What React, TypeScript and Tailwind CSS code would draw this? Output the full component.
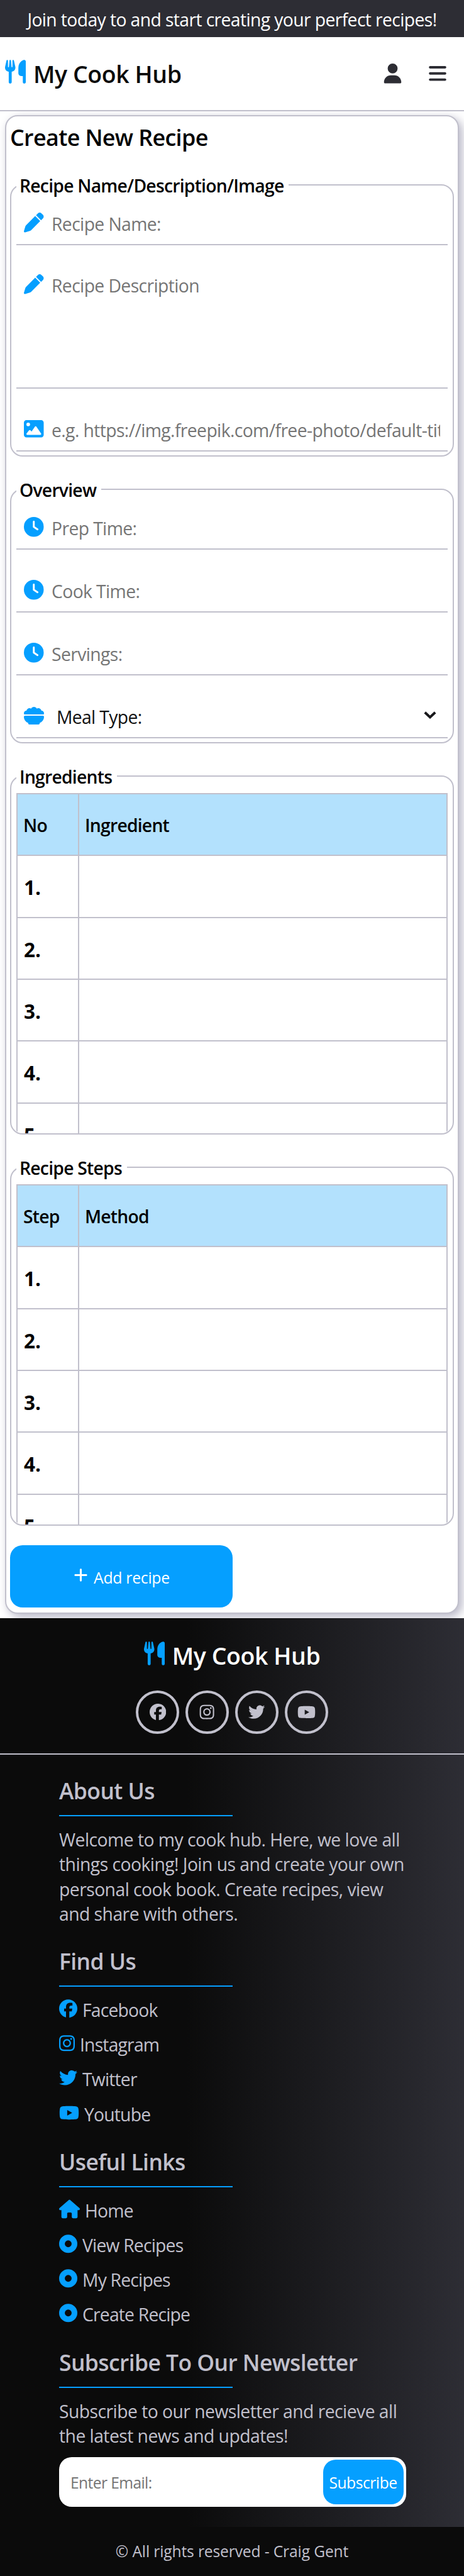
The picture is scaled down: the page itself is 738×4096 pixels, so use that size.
import type { ReactNode } from "react";
import {
  FaBars,
  FaBowlFood,
  FaCircleDot,
  FaClock,
  FaFacebook,
  FaHouse,
  FaImage,
  FaInstagram,
  FaPen,
  FaPlus,
  FaTwitter,
  FaUser,
  FaUtensils,
  FaYoutube,
} from "react-icons/fa6";

function Brand() {
  return (
    <div className="flex items-center">
      <FaUtensils className="-mt-[6px] h-[38px] w-[33px] text-[#059fff]" />
      <span className="ml-[12px] pt-[2px] text-[37.4px] leading-[50px] font-semibold tracking-[-0.38px]">My Cook Hub</span>
    </div>
  );
}

function Panel({ title, className = "", children }: { title: string; className?: string; children: ReactNode }) {
  return (
    <fieldset className={`min-w-0 rounded-[20px] border-2 border-[#c1c0cc] px-2 ${className}`}>
      <legend className="h-[40px] pt-px pr-[8px] pl-[5px] text-[28.3px] leading-[40px] font-semibold tracking-[-0.76px]">{title}</legend>
      {children}
    </fieldset>
  );
}

function Field({ icon, label, className = "h-[100px] items-end" }: { icon: ReactNode; label: string; className?: string }) {
  return (
    <div className={`flex border-b-2 border-[#c1c0cc] px-3 ${className}`}>
      <div className="flex h-[68px] min-w-0 flex-1 items-center">
        <span className="flex w-[32px] shrink-0 justify-center text-[31.5px] text-[#059fff]">{icon}</span>
        <span className="ml-[12px] min-w-0 flex-1 overflow-hidden pt-[3px] text-[28.3px] leading-[40px] tracking-[-0.6px] whitespace-nowrap text-[#757575]">
          {label}
        </span>
      </div>
    </div>
  );
}

function Sheet({ first, second }: { first: string; second: string }) {
  return (
    <div className="mt-[7px] border-x-2 border-t-2 border-[#c1c0cc] font-semibold">
      <div className="flex h-[98.37px] border-b-2 border-[#c1c0cc] bg-[#b3e1fd] text-[28.3px] tracking-[-0.78px]">
        <div className="flex w-[98px] items-center border-r-2 border-[#c1c0cc] pt-[2px] pl-[9px]">{first}</div>
        <div className="flex flex-1 items-center pt-[2px] pl-[9px]">{second}</div>
      </div>
      {["1.", "2.", "3.", "4.", "5."].map((n) => (
        <div key={n} className="flex h-[98.37px] border-b-2 border-[#c1c0cc] text-[31.5px] font-bold">
          <div className="flex w-[98px] items-center border-r-2 border-[#c1c0cc] pt-[3px] pl-[10px]">{n}</div>
          <div className="flex-1" />
        </div>
      ))}
    </div>
  );
}

function Heading({ className, children }: { className: string; children: ReactNode }) {
  return (
    <h3 className={`flex h-[80px] w-[275.5px] items-center border-b-2 border-[#059fff] pt-px text-[35.4px] font-semibold tracking-[-0.55px] whitespace-nowrap ${className}`}>
      {children}
    </h3>
  );
}

function LinkRow({ icon, children }: { icon: ReactNode; children: ReactNode }) {
  return (
    <li className="flex h-[55.1px] items-center">
      <span className="-mt-[3px] text-[29.5px] text-[#059fff]">{icon}</span>
      <span className="ml-[8px] pt-[3px] tracking-[-0.8px]">{children}</span>
    </li>
  );
}

function Social({ children }: { children: ReactNode }) {
  return (
    <span className="flex size-[69px] items-center justify-center rounded-full border-4 border-[#c1c0cc] text-[26.3px]">
      {children}
    </span>
  );
}

export default function App() {
  return (
    <div className="flex h-[4096px] w-full flex-col overflow-hidden bg-white font-['Open_Sans','Noto_Sans',sans-serif] text-black">
      <div className="flex h-[59px] shrink-0 items-center justify-center bg-[#2d2d34] pt-[4px] text-[28.3px] tracking-[-0.6px] text-white">
        Join today to and start creating your perfect recipes!
      </div>

      <header className="flex h-[118px] shrink-0 items-center border-b-2 border-[#c1c0cc] pr-[28px] pl-[8px] text-[#0b0b0b]">
        <Brand />
        <div className="ml-auto flex gap-[43px] text-[31.5px] text-[#2d2d34]">
          <FaUser className="w-[29px]" />
          <FaBars className="w-[28px]" />
        </div>
      </header>

      <main className="mx-2 mt-[6px] h-[2383px] shrink-0 rounded-[20px] border-2 border-[#c1c0cc] bg-white px-[6px] shadow-[5px_5px_15px_#b5b4c4]">
        <h1 className="flex h-[67px] items-center pt-px text-[35.8px] font-semibold tracking-[-0.6px]">Create New Recipe</h1>

        <Panel title="Recipe Name/Description/Image" className="mt-[22px] h-[452px]">
          <Field icon={<FaPen />} label="Recipe Name:" className="h-[76px] items-end" />
          <Field icon={<FaPen />} label="Recipe Description" className="h-[228px] items-start pt-[28px]" />
          <Field icon={<FaImage />} label="e.g. https://img.freepik.com/free-photo/default-title" />
        </Panel>

        <Panel title="Overview" className="mt-8 h-[424px]">
          <Field icon={<FaClock />} label="Prep Time:" className="h-[76px] items-end" />
          <Field icon={<FaClock />} label="Cook Time:" />
          <Field icon={<FaClock />} label="Servings:" />
          <div className="flex h-[100px] items-end border-b-2 border-[#c1c0cc] px-3">
            <div className="flex h-[68px] flex-1 items-center">
              <FaBowlFood className="size-[32px] text-[#059fff]" />
              <span className="ml-[20px] pt-[4px] text-[28.3px] tracking-[-0.65px] text-[#111111]">Meal Type:</span>
              <svg viewBox="0 0 20 12" className="-mt-[2px] mr-[6px] ml-auto h-[12px] w-[20px]" fill="none" stroke="#18181b" strokeWidth="4">
                <path d="M1.8 1.8 10 9.4 18.2 1.8" />
              </svg>
            </div>
          </div>
        </Panel>

        <Panel title="Ingredients" className="mt-8 h-[590px] overflow-hidden">
          <Sheet first="No" second="Ingredient" />
        </Panel>

        <Panel title="Recipe Steps" className="mt-8 h-[590px] overflow-hidden">
          <Sheet first="Step" second="Method" />
        </Panel>

        <button className="mt-[31px] flex h-[98.5px] w-[354px] items-center justify-center rounded-[20px] bg-[#059fff] pt-[5px] text-[24.8px] tracking-[-0.3px] text-white">
          <FaPlus className="-mt-[9px] mr-[8px] size-[25px]" />
          Add recipe
        </button>
      </main>

      <footer className="mt-[7px] flex flex-1 flex-col bg-[#0b0b0b] text-[#c1c0cc]">
        <div className="h-[1444.5px] bg-[linear-gradient(90deg,#0b0b0b_40%,#2d2d34)]">
          <div className="flex h-[217px] flex-col items-center border-b-2 border-[#c1c0cc] pt-[33px]">
            <div className="text-white">
              <Brand />
            </div>
            <div className="mt-[29.5px] flex gap-[9.8px]">
              <Social><FaFacebook /></Social>
              <Social><FaInstagram /></Social>
              <Social><FaTwitter /></Social>
              <Social><FaYoutube className="size-[29px]" /></Social>
            </div>
          </div>

          <div className="ml-[94px] w-[551.5px] text-[28.3px] leading-[39.35px]">
            <Heading className="mt-[18px]">About Us</Heading>
            <p className="mt-[18px] tracking-[-0.53px] whitespace-nowrap">
              Welcome to my cook hub. Here, we love all<br />
              things cooking! Join us and create your own<br />
              personal cook book. Create recipes, view<br />
              and share with others.
            </p>

            <Heading className="mt-[16px]">Find Us</Heading>
            <ul className="mt-[8.5px]">
              <LinkRow icon={<FaFacebook className="w-[29px]" />}>Facebook</LinkRow>
              <LinkRow icon={<FaInstagram className="w-[25px]" />}>Instagram</LinkRow>
              <LinkRow icon={<FaTwitter className="w-[29px]" />}>Twitter</LinkRow>
              <LinkRow icon={<FaYoutube className="h-[33px] w-[32px]" />}>Youtube</LinkRow>
            </ul>

            <Heading className="mt-[10px]">Useful Links</Heading>
            <ul className="mt-[8.5px]">
              <LinkRow icon={<FaHouse className="h-[33px] w-[33px]" />}>Home</LinkRow>
              <LinkRow icon={<FaCircleDot className="w-[29px]" />}>View Recipes</LinkRow>
              <LinkRow icon={<FaCircleDot className="w-[29px]" />}>My Recipes</LinkRow>
              <LinkRow icon={<FaCircleDot className="w-[29px]" />}>Create Recipe</LinkRow>
            </ul>

            <Heading className="mt-[10px]">Subscribe To Our Newsletter</Heading>
            <p className="mt-[18px] tracking-[-0.53px] whitespace-nowrap">
              Subscribe to our newsletter and recieve all<br />
              the latest news and updates!
            </p>
            <div className="mt-[13px] flex h-[78.7px] items-center justify-between rounded-[20px] bg-white pr-[4px] pl-[18px] text-[24.6px]">
              <span className="pt-[3px] tracking-[-0.6px] text-[#757575]">Enter Email:</span>
              <button className="h-[70.8px] w-[128px] rounded-[20px] bg-[#059fff] pt-[3px] tracking-[-0.45px] text-white">Subscribe</button>
            </div>
          </div>
        </div>
        <div className="flex flex-1 items-center justify-center pt-[2px] text-[24.6px] tracking-[-0.13px]">© All rights reserved - Craig Gent</div>
      </footer>
    </div>
  );
}
